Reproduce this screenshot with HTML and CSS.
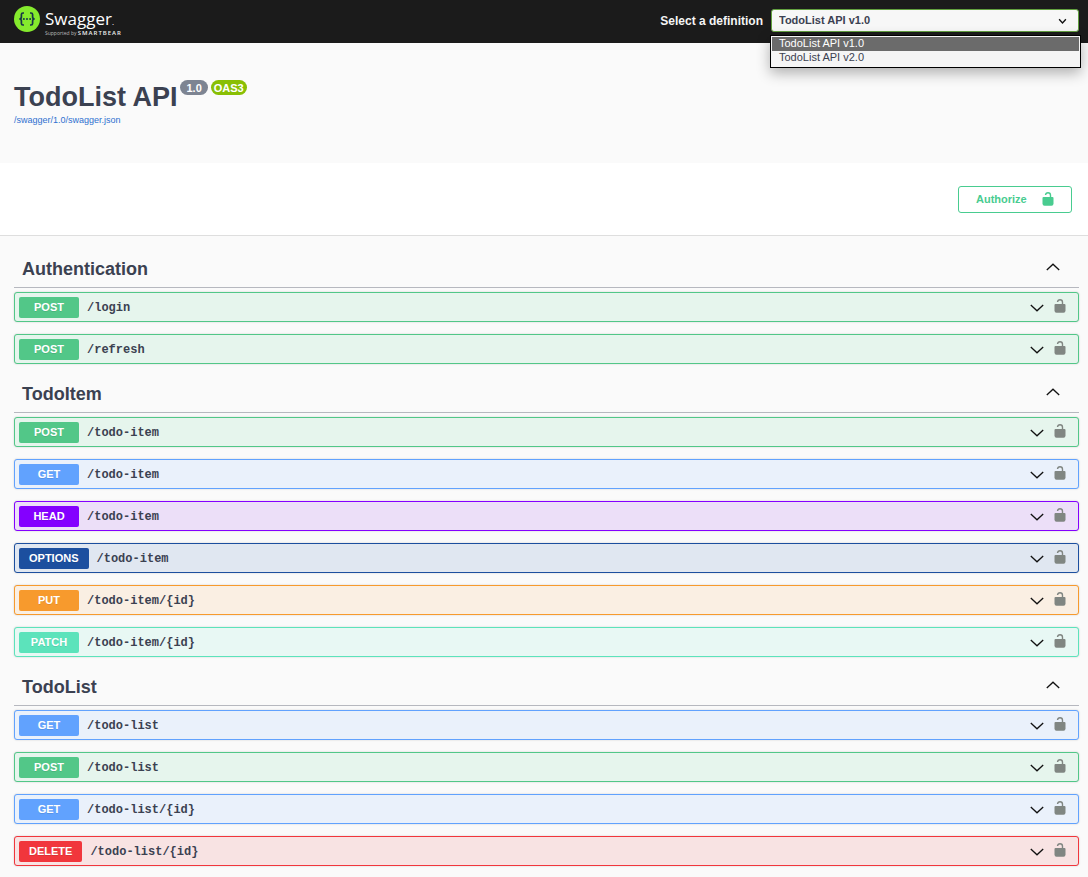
FILE: index.html
```html
<!DOCTYPE html>
<html lang="en">
<head>
<meta charset="utf-8">
<title>TodoList API</title>
<link rel="stylesheet" href="styles.css">
</head>
<body>
<svg class="sprite" aria-hidden="true">
  <symbol id="lock" viewBox="0 0 12 14"><path d="M1.500 5H10.500Q11.500 5 11.500 6V11.500Q11.500 13.800 9.500 13.800H2.500Q.5 13.800 .5 11.500V6Q.5 5 1.500 5Z" fill="currentColor"/><path d="M3.500 3C3.700 1.300 4.600.7 6 .7C7.700.7 8.500 1.800 8.500 3.200V5.500" fill="none" stroke="currentColor" stroke-width="1.400"/></symbol>
  <symbol id="down" viewBox="0 0 14 8"><path d="M.8 1 7 6.800 13.200 1" fill="none" stroke="currentColor" stroke-width="1.300"/></symbol>
  <symbol id="up" viewBox="0 0 14 8"><path d="M.8 7 7 1.200 13.200 7" fill="none" stroke="currentColor" stroke-width="1.300"/></symbol>
</svg>

<header class="topbar">
  <a class="logo" href="#">
    <svg class="logo-mark" viewBox="0 0 26 26" aria-hidden="true">
      <circle cx="13" cy="13" r="13" fill="#85ea2d"/>
      <g fill="none" stroke="#173647" stroke-width="1.700">
        <path d="M10 7H9Q7.400 7 7.400 8.500V11Q7.400 13 5.300 13Q7.400 13 7.400 15V17.500Q7.400 19 9 19H10"/>
        <path d="M16 7H17Q18.600 7 18.600 8.500V11Q18.600 13 20.700 13Q18.600 13 18.600 15V17.500Q18.600 19 17 19H16"/>
      </g>
      <g fill="#173647"><circle cx="9.900" cy="13" r="1"/><circle cx="13" cy="13" r="1"/><circle cx="16.100" cy="13" r="1"/></g>
    </svg>
    <span class="logo-text">
      <span class="logo-name">Swagger<span class="logo-dot">.</span></span>
      <span class="logo-by">Supported by <b>SMARTBEAR</b></span>
    </span>
  </a>
  <div class="picker">
    <label for="definition">Select a definition</label>
    <div class="select-wrap">
      <select id="definition" class="select">
        <option selected>TodoList API v1.0</option>
        <option>TodoList API v2.0</option>
      </select>
      <svg class="select-arrow" viewBox="0 0 8 6" aria-hidden="true"><path d="M1 1 4 4.300 7 1" fill="none" stroke="#111" stroke-width="1.200"/></svg>
      <ul class="menu" role="listbox" aria-label="Definitions">
        <li class="menu-item active" role="option" aria-selected="true">TodoList API v1.0</li>
        <li class="menu-item" role="option" aria-selected="false">TodoList API v2.0</li>
      </ul>
    </div>
  </div>
</header>

<section class="info">
  <div class="title-line">
    <h1>TodoList API</h1>
    <span class="pill">1.0</span>
    <span class="pill oas">OAS3</span>
  </div>
  <a class="spec-link" href="#">/swagger/1.0/swagger.json</a>
</section>

<section class="scheme">
  <button class="authorize" type="button">Authorize <svg class="lock"><use href="#lock"/></svg></button>
</section>

<main class="operations" id="operations"></main>
<script src="app.js"></script>
</body>
</html>
```
FILE: app.js
```js
const groups = [
  ["Authentication", [["post", "/login"], ["post", "/refresh"]]],
  ["TodoItem", [
    ["post", "/todo-item"], ["get", "/todo-item"], ["head", "/todo-item"],
    ["options", "/todo-item"], ["put", "/todo-item/{id}"], ["patch", "/todo-item/{id}"]
  ]],
  ["TodoList", [
    ["get", "/todo-list"], ["post", "/todo-list"],
    ["get", "/todo-list/{id}"], ["delete", "/todo-list/{id}"]
  ]]
];

const row = ([method, path]) => `
  <div class="op ${method}">
    <button class="op-main" type="button" aria-expanded="false">
      <span class="method">${method.toUpperCase()}</span>
      <span class="path">${path}</span>
      <svg class="chevron"><use href="#down"/></svg>
    </button>
    <button class="op-lock" type="button" aria-label="Authorize ${path}"><svg class="lock"><use href="#lock"/></svg></button>
  </div>`;

document.getElementById("operations").innerHTML = groups.map(([name, ops]) => `
  <section class="group">
    <h2><button class="tag" type="button" aria-expanded="true">${name}<svg class="chevron"><use href="#up"/></svg></button></h2>
    <div class="op-list">${ops.map(row).join("")}</div>
  </section>`).join("");
```
FILE: styles.css
```css
* { box-sizing: border-box; }
body {
  margin: 0;
  background: #fafafa;
  color: #3b4151;
  font-family: "Liberation Sans", Arial, sans-serif;
}
button { font: inherit; color: inherit; background: none; border: 0; padding: 0; cursor: pointer; }
h1, h2 { margin: 0; }
.sprite { display: none; }
.chevron { width: 14px; height: 8px; color: #111; flex: none; }
.lock { width: 12px; height: 14px; flex: none; }

.topbar {
  display: flex;
  justify-content: space-between;
  align-items: flex-start;
  height: 43px;
  padding: 6px 9px 0 14px;
  background: #1b1b1b;
}
.logo { display: flex; gap: 5px; color: #fff; text-decoration: none; font-family: "Open Sans", sans-serif; }
.logo-mark { width: 26px; height: 26px; }
.logo-text { display: flex; flex-direction: column; }
.logo-name { height: 24px; font-size: 17px; line-height: 25px; }
.logo-dot { font-size: 8px; line-height: 8px; }
.logo-by { font-size: 5px; line-height: 6px; white-space: nowrap; color: #bbb; }
.logo-by b { font-size: 6px; line-height: 6px; font-weight: 600; letter-spacing: 1px; color: #eee; }

.picker { display: flex; align-items: center; gap: 8px; padding-top: 3px; }
.picker label { color: #f5f5f5; font-size: 12px; font-weight: bold; }
.select-wrap { position: relative; width: 308px; }
.select {
  display: block;
  width: 100%;
  height: 23px;
  padding: 0 7px 1px;
  appearance: none;
  border: 1px solid #62a03f;
  border-radius: 3px;
  background: #f7f7f7;
  color: #3b4151;
  font: bold 11px "Liberation Sans", Arial, sans-serif;
}
.select-arrow { position: absolute; right: 12px; top: 9px; width: 9px; height: 7px; pointer-events: none; }
.menu {
  position: absolute;
  top: 26px;
  left: -1px;
  right: -2px;
  margin: 0;
  padding: 1px 1px 2px;
  list-style: none;
  border: 1px solid #000;
  background: #f5f5f5;
  box-shadow: 0 5px 14px rgba(0, 0, 0, .3);
}
.menu-item { padding: 0 7px 1px; font-size: 11px; line-height: 13px; }
.menu-item.active { background: #6b6b6b; color: #fff; }

.info { padding: 37px 14px 37px; }
.title-line { display: flex; align-items: flex-start; gap: 3px; }
h1 { font-size: 27px; line-height: 34px; }
.pill {
  height: 15px;
  padding: 0 6px;
  border-radius: 8px;
  background: #7d8492;
  color: #fff;
  font-size: 11px;
  font-weight: bold;
  line-height: 16px;
}
.pill.oas { padding: 0 3px; background: #89bf04; }
.spec-link { display: block; padding-top: 1px; color: #2f70d0; font-size: 9px; line-height: 11px; text-decoration: none; }

.scheme {
  display: flex;
  justify-content: flex-end;
  padding: 23px 16px 22px;
  background: #fff;
  border-bottom: 1px solid #dedede;
}
.authorize {
  display: flex;
  align-items: center;
  justify-content: space-between;
  width: 114px;
  height: 27px;
  padding: 0 17px 2px;
  border: 1px solid #49cc90;
  border-radius: 3px;
  color: #49cc90;
  font-size: 11px;
  font-weight: bold;
}

.operations { padding: 14px 9px 11px 14px; }
.group { padding-bottom: 11px; }
.group:last-child { padding-bottom: 0; }
.tag {
  display: flex;
  align-items: center;
  justify-content: space-between;
  width: 100%;
  height: 38px;
  padding: 2px 19px 0 8px;
  border-bottom: 1px solid #b6b8bf;
  font-size: 18px;
  font-weight: bold;
}
.tag .chevron { margin-bottom: 5px; }
.op-list { display: flex; flex-direction: column; gap: 12px; padding-top: 4px; }
.op {
  display: flex;
  border: 1px solid var(--line);
  border-radius: 3px;
  background: var(--fill);
  box-shadow: 0 0 2px rgba(0, 0, 0, .19);
}
.op-main { display: flex; align-items: center; flex: 1; gap: 8px; padding: 4px 0 3px 4px; text-align: left; }
.method {
  min-width: 60px;
  padding: 0 10px;
  border-radius: 2px;
  background: var(--line);
  color: #fff;
  font-size: 11px;
  font-weight: bold;
  line-height: 21px;
  text-align: center;
  text-shadow: 0 1px 0 rgba(0, 0, 0, .1);
}
.path { flex: 1; font: bold 12px "Liberation Mono", "Courier New", monospace; }
.op-lock { display: flex; align-items: flex-start; padding: 6px 13px 0 10px; color: #808682; }
.op-lock { padding-right: 12px; }

.post { --line: #52c788; --fill: #e6f5ed; }
.get { --line: #61a2fe; --fill: #eaf1fb; }
.head { --line: #8400ff; --fill: #ecdff8; }
.options { --line: #1c4f9f; --fill: #e0e7f1; }
.put { --line: #f79a2d; --fill: #faefe3; }
.patch { --line: #5ce3bb; --fill: #e8f8f4; }
.delete { --line: #f1363c; --fill: #f8e3e3; }
```
